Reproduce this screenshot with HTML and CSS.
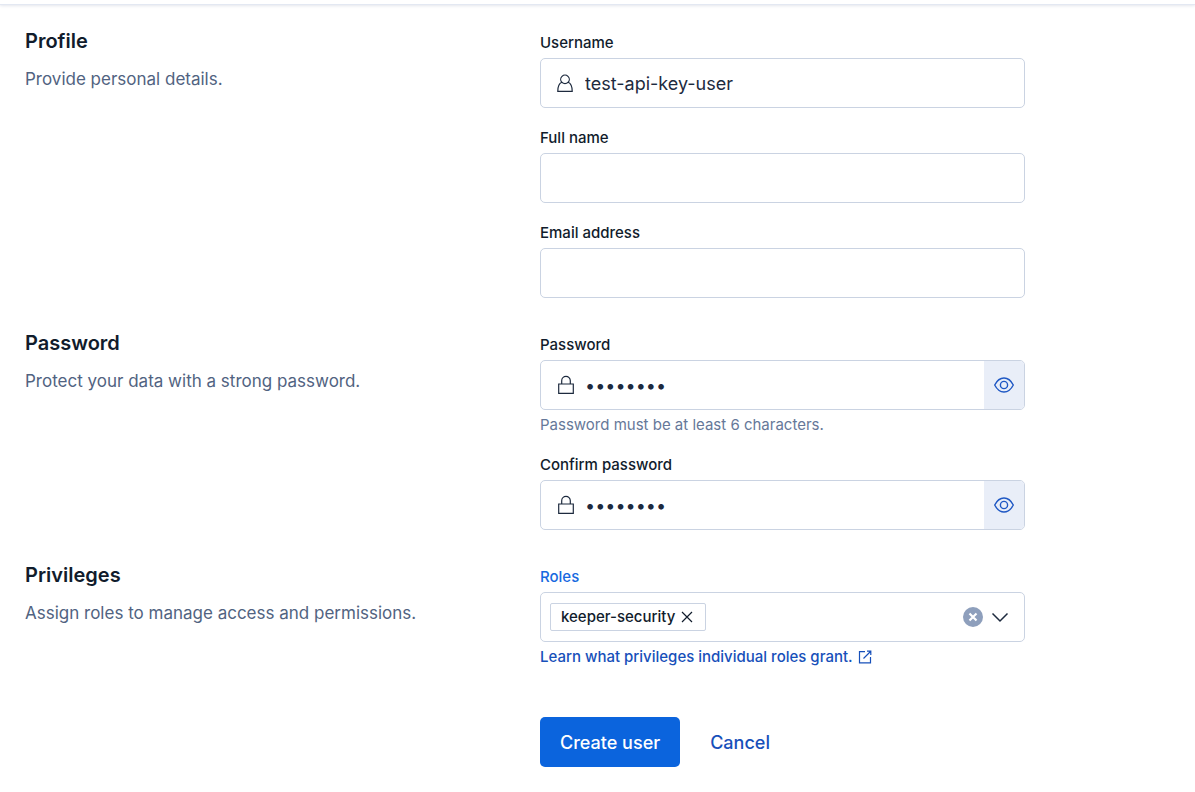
FILE: index.html
```html
<!DOCTYPE html>
<html lang="en">
<head>
<meta charset="utf-8">
<meta name="viewport" content="width=device-width, initial-scale=1">
<title>Create user</title>
<link rel="stylesheet" href="styles.css">
</head>
<body>
<header class="topbar"></header>
<main class="page">
  <form class="form">
    <section class="group">
      <div class="intro">
        <h2 class="title">Profile</h2>
        <p class="description">Provide personal details.</p>
      </div>
      <div class="fields">
        <div class="row">
          <label class="label" for="username">Username</label>
          <div class="control">
            <svg class="icon" viewBox="0 0 20 20" aria-hidden="true"><path d="M6.800 9.300A4.300 4.300 0 1 1 13.200 9.300M6.800 9.300C4 10.500 2.800 13 2.800 18.300H17.200C17.200 13 16 10.500 13.200 9.300M6.800 9.300C8.600 10.800 11.400 10.800 13.200 9.300"/></svg>
            <input class="input" id="username" type="text" value="test-api-key-user">
          </div>
        </div>
        <div class="row">
          <label class="label" for="fullname">Full name</label>
          <div class="control"><input class="input" id="fullname" type="text"></div>
        </div>
        <div class="row">
          <label class="label" for="email">Email address</label>
          <div class="control"><input class="input" id="email" type="email"></div>
        </div>
      </div>
    </section>

    <section class="group">
      <div class="intro">
        <h2 class="title">Password</h2>
        <p class="description">Protect your data with a strong password.</p>
      </div>
      <div class="fields">
        <div class="row">
          <label class="label" for="password">Password</label>
          <div class="control">
            <svg class="icon" viewBox="0 0 20 20" aria-hidden="true"><path d="M3.700 9H18.300V18.300H3.700ZM6.700 9V5.700A4.300 4.300 0 0 1 15.300 5.700V9"/></svg>
            <input class="input" id="password" type="password" value="changeme">
            <button class="reveal" type="button" aria-label="Show password">
              <svg class="eye" viewBox="0 0 20 20" aria-hidden="true"><path d="M.7 10C3 5.500 6.500 3 10 3S17 5.500 19.300 10C17 14.500 13.500 17 10 17S3 14.500.7 10Z"/><circle cx="10" cy="10" r="3.600"/></svg>
            </button>
          </div>
          <p class="help">Password must be at least 6 characters.</p>
        </div>
        <div class="row">
          <label class="label" for="confirm">Confirm password</label>
          <div class="control">
            <svg class="icon" viewBox="0 0 20 20" aria-hidden="true"><path d="M3.700 9H18.300V18.300H3.700ZM6.700 9V5.700A4.300 4.300 0 0 1 15.300 5.700V9"/></svg>
            <input class="input" id="confirm" type="password" value="changeme">
            <button class="reveal" type="button" aria-label="Show password">
              <svg class="eye" viewBox="0 0 20 20" aria-hidden="true"><path d="M.7 10C3 5.500 6.500 3 10 3S17 5.500 19.300 10C17 14.500 13.500 17 10 17S3 14.500.7 10Z"/><circle cx="10" cy="10" r="3.600"/></svg>
            </button>
          </div>
        </div>
      </div>
    </section>

    <section class="group">
      <div class="intro">
        <h2 class="title">Privileges</h2>
        <p class="description">Assign roles to manage access and permissions.</p>
      </div>
      <div class="fields">
        <div class="row">
          <label class="label label-active" for="roles">Roles</label>
          <div class="control combo">
            <span class="pill">keeper-security
              <button class="plain" type="button" aria-label="Remove keeper-security"><svg class="cross" viewBox="0 0 12 12" aria-hidden="true"><path d="M1 1 11 11M11 1 1 11"/></svg></button>
            </span>
            <input class="input combo-input" id="roles" type="text" role="combobox" aria-expanded="false">
            <button class="plain" type="button" aria-label="Clear roles"><svg class="clear" viewBox="0 0 20 20" aria-hidden="true"><circle cx="10" cy="10" r="10"/><path d="M6.500 6.500 13.500 13.500M13.500 6.500 6.500 13.500"/></svg></button>
            <button class="plain" type="button" aria-label="Open roles list"><svg class="chevron" viewBox="0 0 20 20" aria-hidden="true"><path d="M2.500 6.500 10 14 17.500 6.500"/></svg></button>
          </div>
          <a class="learn" href="#">Learn what privileges individual roles grant.
            <svg class="external" viewBox="0 0 14 14" aria-hidden="true"><path d="M7 1.700H1.500V12.900H12.500V7M5.500 8.500 12.500 1.500M9 1.200H12.800V5"/></svg>
          </a>
        </div>
        <div class="actions">
          <button class="button primary" type="submit">Create user</button>
          <button class="button quiet" type="button">Cancel</button>
        </div>
      </div>
    </section>
  </form>
</main>
</body>
</html>
```
FILE: styles.css
```css
* { box-sizing: border-box; }

body {
  margin: 0;
  background: #fff;
  color: #1d2a3e;
  font: 18px/30px Inter, "Liberation Sans", sans-serif;
}

button, input { font: inherit; color: inherit; }
button { cursor: pointer; }

.topbar {
  height: 5px;
  border-bottom: 1px solid #e3e8f2;
  box-shadow: 0 1px 3px rgba(40, 60, 110, 0.12);
}

.page { padding: 21px 25px 25px; }

.form {
  display: grid;
  gap: 30px;
  max-width: 1000px;
}

.group {
  display: grid;
  grid-template-columns: 1fr 1fr;
  gap: 30px;
}

.title {
  margin: 0 0 8px;
  color: #111c2c;
  font-size: 20px;
  font-weight: 600;
}

.description {
  margin: 0;
  color: #516381;
  font-size: 17px;
}

.fields {
  display: grid;
  gap: 20px;
  align-content: start;
  padding-top: 7px;
}

.row { display: grid; gap: 5px; }

.label {
  justify-self: start;
  color: #111c2c;
  font-size: 15px;
  font-weight: 500;
  line-height: 20px;
}

.label-active { color: #1769e0; }

.control {
  display: flex;
  align-items: center;
  height: 50px;
  overflow: hidden;
  border: 1px solid #cad3e2;
  border-radius: 5px;
  background: #fff;
}

.control:focus-within { border-color: #0b64dd; }

.input {
  flex: 1;
  min-width: 0;
  height: 48px;
  padding: 0 10px;
  border: 0;
  outline: 0;
  background: transparent;
}

svg {
  display: block;
  flex: none;
  fill: none;
  stroke: currentColor;
}

.icon {
  width: 20px;
  height: 20px;
  margin-left: 14px;
  stroke-width: 1.2;
}

.reveal {
  display: grid;
  place-items: center;
  width: 40px;
  height: 48px;
  padding: 0;
  border: 0;
  background: #e9eef8;
  color: #1f58c4;
}

.eye { width: 20px; height: 20px; stroke-width: 1.4; }

.help {
  margin: 0;
  color: #667899;
  font-size: 15px;
  line-height: 20px;
}

.combo { gap: 7px; padding: 0 14px 0 9px; }
.combo-input { padding: 0; }

.pill {
  display: flex;
  align-items: center;
  gap: 6px;
  height: 28px;
  padding: 0 12px 0 10px;
  border: 1px solid #cad3e2;
  border-radius: 2px;
  color: #111c2c;
  font-size: 15px;
  font-weight: 500;
}

.plain { padding: 0; border: 0; background: transparent; }
.cross { width: 12px; height: 12px; stroke-width: 1.2; }
.clear { width: 20px; height: 20px; fill: #8e9fbc; stroke: none; }
.clear path { stroke: #fff; stroke-width: 2.2; }
.chevron { width: 20px; height: 20px; stroke-width: 1.5; }

.learn {
  display: flex;
  align-items: center;
  justify-self: start;
  gap: 5px;
  color: #1750ba;
  font-size: 15px;
  font-weight: 500;
  line-height: 20px;
  text-decoration: none;
}

.external { width: 14px; height: 14px; stroke-width: 1.2; }

.actions { display: flex; gap: 10px; margin-top: 30px; }

.button {
  height: 50px;
  padding: 2px 20px 0;
  border: 0;
  border-radius: 5px;
  font-weight: 500;
}

.primary { min-width: 140px; background: #0b64dd; color: #fff; }
.quiet { background: transparent; color: #1750ba; }
```
